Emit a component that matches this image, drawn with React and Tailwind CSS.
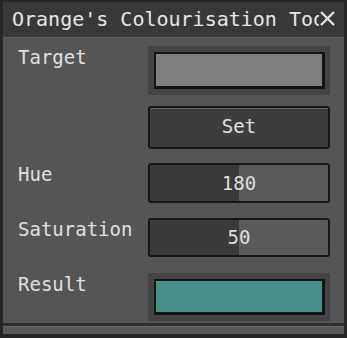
import React from "react";

const font = { fontFamily: '"DejaVu Sans Mono", "Liberation Mono", monospace' };

const Swatch = ({ color }) => (
    <div className="w-[182px] h-full bg-[#444444] p-[6px] pr-[5px]">
        <div className={`w-full h-full border-2 border-b-[3px] border-r-[3px] border-[#141414] ${color}`} />
    </div>
);

const Slider = ({ value }) => (
    <div className="relative w-[182px] h-full border-2 border-[#161616] rounded-[3px] flex overflow-hidden">
        <div className="w-1/2 h-full bg-[#3a3a3a]" />
        <div className="w-1/2 h-full bg-[#5a5a5a]" />
        <div className="absolute inset-0 flex items-center justify-center text-[19px] text-[#dedede]">{value}</div>
    </div>
);

const Row = ({ label, className, children }) => (
    <div className={`flex items-start ${className}`}>
        <div className="w-[130px] text-[19px] leading-[24px] text-[#e0e0e0] -mt-[1px]">{label}</div>
        {children}
    </div>
);

export default function App() {
    return (
        <div style={font} className="w-[347px] h-[338px] bg-[#262626] pt-[2px] px-[3px] pb-[4px] flex flex-col">
            {/* title bar */}
            <div className="h-[35px] bg-[#383838] flex items-center pl-[9px]">
                <div className="w-[307px] overflow-hidden whitespace-nowrap text-[20px] leading-[24px] text-[#e6e6e6] -mt-[2px]">
                    Orange's Colourisation Tool
                </div>
                <svg width="17" height="15" viewBox="0 0 17 15" className="-mt-[2px]">
                    <path d="M2 1 L15 14 M15 1 L2 14" stroke="#e2e2e2" strokeWidth="2.4" />
                </svg>
            </div>

            {/* body */}
            <div className="flex-1 bg-[#555555] border-t border-[#5f5f5f] pt-[8px] pl-[15px] pr-[14px]">
                <Row label="Target" className="h-[49px]">
                    <Swatch color="bg-[#7f7f7f]" />
                </Row>
                <Row label="" className="h-[43px] mt-[11px]">
                    <button className="w-[182px] h-full border-2 border-[#161616] rounded-[3px] bg-[#3d3d3d] shadow-[inset_0_1px_0_#6a6a6a] text-[19px] text-[#e2e2e2] pb-[2px]">
                        Set
                    </button>
                </Row>
                <Row label="Hue" className="h-[40px] mt-[14px]">
                    <Slider value="180" />
                </Row>
                <Row label="Saturation" className="h-[39px] mt-[15px]">
                    <Slider value="50" />
                </Row>
                <Row label="Result" className="h-[48px] mt-[16px]">
                    <Swatch color="bg-[#4a8e8b]" />
                </Row>
            </div>

            <div className="h-[3px] bg-[#2e2e2e]" />
            <div className="h-[8px] bg-[#5a5a5a] border-t border-[#686868]" />
        </div>
    );
}
